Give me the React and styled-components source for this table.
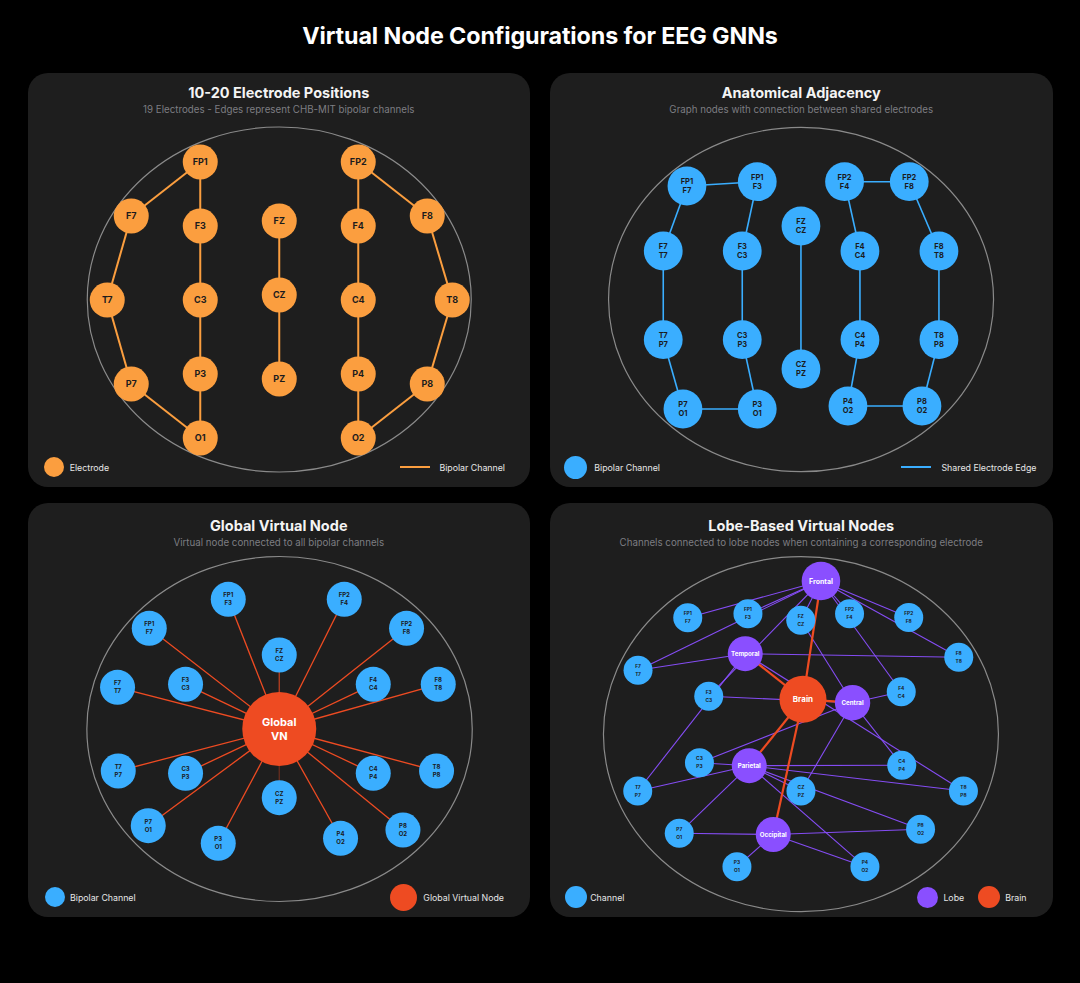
import React from 'react';
import styled, { createGlobalStyle } from 'styled-components';

const ORANGE = '#FB9E3F';
const BLUE = '#3AAEFF';
const PURPLE = '#8A4FFF';
const RED = '#EE4B22';
const DARK = '#1b1b1d';

const GlobalStyle = createGlobalStyle`
  html, body { margin: 0; padding: 0; background: #000; }
  body { font-family: Inter, "Noto Sans", "Liberation Sans", sans-serif; -webkit-font-smoothing: antialiased; }
`;

const Page = styled.div`
  width: 1080px;
  height: 983px;
  background: #000;
  display: flex;
  flex-direction: column;
  align-items: center;
`;

const MainTitle = styled.h1`
  margin: 0;
  height: 73px;
  padding-bottom: 2px;
  box-sizing: border-box;
  display: flex;
  align-items: center;
  justify-content: center;
  color: #ffffff;
  font-size: 23.3px;
  font-weight: 700;
  letter-spacing: -0.1px;
`;

const Grid = styled.div`
  width: 1025px;
  display: grid;
  grid-template-columns: 1fr 1fr;
  grid-auto-rows: 414px;
  column-gap: 20px;
  row-gap: 16px;
`;

const Panel = styled.section`
  position: relative;
  background: #1e1e1e;
  border-radius: 20px;
  overflow: hidden;
  display: flex;
  flex-direction: column;
`;

const Header = styled.header`
  height: ${(p) => p.$h}px;
  flex: none;
  box-sizing: border-box;
  padding-top: ${(p) => p.$pt}px;
  display: flex;
  flex-direction: column;
  align-items: center;
  gap: 1px;
`;

const PanelTitle = styled.h2`
  margin: 0;
  font-size: 14.5px;
  line-height: 18px;
  font-weight: 700;
  color: #f4f4f4;
`;

const Subtitle = styled.p`
  margin: 0;
  font-size: 9.75px;
  line-height: 13px;
  color: #7d7d82;
`;

const Chart = styled.svg`
  display: block;
  width: 100%;
  flex: 1;
  min-height: 0;
`;

const HeadOutline = styled.ellipse`
  fill: none;
  stroke: #8a8a8a;
  stroke-width: 1.2;
`;

const Edge = styled.line`
  stroke: ${(p) => p.$color};
  stroke-width: ${(p) => p.$w};
  stroke-opacity: ${(p) => p.$o ?? 1};
`;

const Dot = styled.circle`
  fill: ${(p) => p.$color};
`;

const Label = styled.text`
  font-family: Inter, "Noto Sans", sans-serif;
  font-weight: 700;
  font-size: ${(p) => p.$size}px;
  fill: ${(p) => p.$color};
  text-anchor: middle;
`;

const Legend = styled.div`
  position: absolute;
  left: 0;
  right: 0;
  bottom: 0;
  height: 40px;
  box-sizing: border-box;
  padding: 0 ${(p) => p.$pr}px 0 ${(p) => p.$pl}px;
  display: flex;
  align-items: center;
  justify-content: space-between;
`;

const LegendGroup = styled.div`
  display: flex;
  align-items: center;
  gap: 14px;
`;

const LegendItem = styled.div`
  display: flex;
  align-items: center;
  gap: ${(p) => p.$gap}px;
  font-size: 8.8px;
  color: #e6e6e6;
  white-space: nowrap;
`;

const Swatch = styled.span`
  flex: none;
  width: ${(p) => p.$size}px;
  height: ${(p) => p.$size}px;
  border-radius: 50%;
  background: ${(p) => p.$color};
`;

const LineSwatch = styled.span`
  flex: none;
  width: 30px;
  height: 2px;
  background: ${(p) => p.$color};
`;

/* ---------- helpers ---------- */

function NodeText({ x, y, lines, size, color, gap = 0 }) {
  const off = size * 0.36;
  if (lines.length === 1) {
    return (
      <Label x={x} y={y + off} $size={size} $color={color}>
        {lines[0]}
      </Label>
    );
  }
  return (
    <Label $size={size} $color={color}>
      <tspan x={x} y={y - gap + off}>{lines[0]}</tspan>
      <tspan x={x} y={y + gap + off}>{lines[1]}</tspan>
    </Label>
  );
}

function ChartFrame({ top, children }) {
  return (
    <Chart viewBox={`0 ${top} 502 ${414 - top}`} preserveAspectRatio="xMidYMin meet">
      {children}
    </Chart>
  );
}

/* ---------- panel 1 ---------- */

const P1 = {
  FP1: [172, 89], FP2: [330, 89],
  F7: [103, 143], F3: [172, 153], FZ: [251, 148], F4: [330, 153], F8: [399, 143],
  T7: [79, 227], C3: [172, 227], CZ: [251, 222], C4: [330, 227], T8: [424, 227],
  P7: [103, 311], P3: [172, 301], PZ: [251, 306], P4: [330, 301], P8: [399, 311],
  O1: [172, 365], O2: [330, 365],
};
const P1E = [
  ['FP1', 'F7'], ['F7', 'T7'], ['T7', 'P7'], ['P7', 'O1'],
  ['FP1', 'F3'], ['F3', 'C3'], ['C3', 'P3'], ['P3', 'O1'],
  ['FZ', 'CZ'], ['CZ', 'PZ'],
  ['FP2', 'F4'], ['F4', 'C4'], ['C4', 'P4'], ['P4', 'O2'],
  ['FP2', 'F8'], ['F8', 'T8'], ['T8', 'P8'], ['P8', 'O2'],
];

function ElectrodeChart() {
  return (
    <ChartFrame top={44}>
      <HeadOutline cx={251} cy={226.5} rx={192} ry={172.5} />
      {P1E.map(([a, b]) => (
        <Edge key={a + b} x1={P1[a][0]} y1={P1[a][1]} x2={P1[b][0]} y2={P1[b][1]} $color={ORANGE} $w={2} />
      ))}
      {Object.entries(P1).map(([k, [x, y]]) => (
        <g key={k}>
          <Dot cx={x} cy={y} r={17.5} $color={ORANGE} />
          <NodeText x={x} y={y} lines={[k]} size={9} color={DARK} />
        </g>
      ))}
    </ChartFrame>
  );
}

/* ---------- panel 2 ---------- */

const P2 = {
  'FP1-F7': [136.7, 113], 'FP1-F3': [207, 108.7], 'FP2-F4': [294.3, 108.7], 'FP2-F8': [359, 108.7],
  'F7-T7': [113, 178], 'F3-C3': [192, 178], 'FZ-CZ': [250.7, 153], 'F4-C4': [309.7, 178], 'F8-T8': [388.7, 178],
  'T7-P7': [113, 266.7], 'C3-P3': [192, 266.7], 'CZ-PZ': [250.7, 296], 'C4-P4': [309.7, 266.7], 'T8-P8': [388.7, 266.7],
  'P7-O1': [132.7, 336], 'P3-O1': [207, 336], 'P4-O2': [297.7, 333], 'P8-O2': [371.7, 333],
};
const P2E = [
  ['FP1-F7', 'FP1-F3'], ['FP1-F7', 'F7-T7'], ['F7-T7', 'T7-P7'], ['T7-P7', 'P7-O1'], ['P7-O1', 'P3-O1'],
  ['FP1-F3', 'F3-C3'], ['F3-C3', 'C3-P3'], ['C3-P3', 'P3-O1'],
  ['FZ-CZ', 'CZ-PZ'],
  ['FP2-F4', 'FP2-F8'], ['FP2-F4', 'F4-C4'], ['F4-C4', 'C4-P4'], ['C4-P4', 'P4-O2'], ['P4-O2', 'P8-O2'],
  ['FP2-F8', 'F8-T8'], ['F8-T8', 'T8-P8'], ['T8-P8', 'P8-O2'],
];

function AdjacencyChart() {
  return (
    <ChartFrame top={44}>
      <HeadOutline cx={250.8} cy={226.5} rx={192.5} ry={172.2} />
      {P2E.map(([a, b]) => (
        <Edge key={a + b} x1={P2[a][0]} y1={P2[a][1]} x2={P2[b][0]} y2={P2[b][1]} $color={BLUE} $w={1.6} />
      ))}
      {Object.entries(P2).map(([k, [x, y]]) => (
        <g key={k}>
          <Dot cx={x} cy={y} r={19.4} $color={BLUE} />
          <NodeText x={x} y={y} lines={k.split('-')} size={7.5} gap={4.4} color={DARK} />
        </g>
      ))}
    </ChartFrame>
  );
}

/* ---------- panel 3 ---------- */

const VN = [251, 226];
const P3 = {
  'FP1-F3': [200, 96.3], 'FP2-F4': [316, 96.3], 'FP1-F7': [121, 125.3], 'FP2-F8': [378.3, 125.3],
  'FZ-CZ': [251, 152],
  'F7-T7': [89.3, 184.3], 'F3-C3': [157.3, 181.3], 'F4-C4': [345, 181.3], 'F8-T8': [410, 181.3],
  'T7-P7': [90, 268], 'C3-P3': [157.3, 270.3], 'C4-P4': [345, 270.3], 'T8-P8': [408.3, 268],
  'CZ-PZ': [251, 294.7],
  'P7-O1': [120, 322.7], 'P3-O1': [190, 340.3], 'P4-O2': [312.3, 335.3], 'P8-O2': [374.7, 327],
};
const P3Fade = { 'FZ-CZ': 0.75, 'CZ-PZ': 0.35 };

function GlobalChart() {
  return (
    <ChartFrame top={48}>
      <HeadOutline cx={251.3} cy={226} rx={192.7} ry={172.5} />
      {Object.entries(P3).map(([k, [x, y]]) => (
        <Edge key={k} x1={x} y1={y} x2={VN[0]} y2={VN[1]} $color={RED} $w={1.3} $o={P3Fade[k] ?? 1} />
      ))}
      {Object.entries(P3).map(([k, [x, y]]) => (
        <g key={k}>
          <Dot cx={x} cy={y} r={17.5} $color={BLUE} />
          <NodeText x={x} y={y} lines={k.split('-')} size={6} gap={4} color={DARK} />
        </g>
      ))}
      <Dot cx={VN[0]} cy={VN[1]} r={37} $color={RED} />
      <NodeText x={VN[0]} y={VN[1]} lines={['Global', 'VN']} size={11} gap={7} color="#ffffff" />
    </ChartFrame>
  );
}

/* ---------- panel 4 ---------- */

const LOBES = {
  Frontal: { p: [270.7, 78], r: 19.3, s: 7 },
  Temporal: { p: [195, 150.7], r: 17.5, s: 6.2 },
  Central: { p: [302.3, 199.7], r: 17.7, s: 6.2 },
  Parietal: { p: [199, 262.7], r: 17.5, s: 6.2 },
  Occipital: { p: [223, 331.5], r: 17.5, s: 6.2 },
};
const BRAIN = [252.7, 196.3];
const P4 = {
  'FP1-F7': [137.5, 114.7], 'FP1-F3': [197.7, 110.7], 'FZ-CZ': [250.5, 117.3], 'FP2-F4': [299.3, 110.7],
  'FP2-F8': [358.5, 114.5], 'F8-T8': [408.5, 154.3], 'F7-T7': [87.8, 167.2], 'F3-C3': [158.5, 193.2],
  'F4-C4': [351, 188.8], 'C3-P3': [149.2, 259.7], 'C4-P4': [351.5, 262.3], 'T7-P7': [87.5, 288],
  'CZ-PZ': [250.7, 288], 'T8-P8': [413.2, 288], 'P7-O1': [129, 330.2], 'P8-O2': [370.3, 326.3],
  'P3-O1': [186.7, 363.7], 'P4-O2': [314.7, 363.7],
};
const LOBE_EDGES = {
  Frontal: ['FP1-F7', 'FP1-F3', 'FZ-CZ', 'FP2-F4', 'FP2-F8', 'F7-T7', 'F3-C3', 'F4-C4', 'F8-T8'],
  Temporal: ['F7-T7', 'T7-P7', 'F8-T8', 'T8-P8'],
  Central: ['F3-C3', 'C3-P3', 'FZ-CZ', 'CZ-PZ', 'F4-C4', 'C4-P4'],
  Parietal: ['T7-P7', 'C3-P3', 'CZ-PZ', 'C4-P4', 'T8-P8', 'P7-O1', 'P4-O2', 'P8-O2'],
  Occipital: ['P7-O1', 'P3-O1', 'P4-O2', 'P8-O2'],
};

function LobeChart() {
  return (
    <ChartFrame top={48}>
      <HeadOutline cx={250.7} cy={231.2} rx={197.5} ry={177.5} />
      {Object.entries(LOBE_EDGES).flatMap(([lobe, chans]) =>
        chans.map((c) => (
          <Edge
            key={lobe + c}
            x1={LOBES[lobe].p[0]} y1={LOBES[lobe].p[1]} x2={P4[c][0]} y2={P4[c][1]}
            $color={PURPLE} $w={1.1} $o={0.95}
          />
        ))
      )}
      {Object.entries(LOBES).map(([k, l]) => (
        <Edge key={k} x1={BRAIN[0]} y1={BRAIN[1]} x2={l.p[0]} y2={l.p[1]} $color={RED} $w={2.2} />
      ))}
      {Object.entries(P4).map(([k, [x, y]]) => (
        <g key={k}>
          <Dot cx={x} cy={y} r={14.5} $color={BLUE} />
          <NodeText x={x} y={y} lines={k.split('-')} size={4.8} gap={4} color={DARK} />
        </g>
      ))}
      <Dot cx={BRAIN[0]} cy={BRAIN[1]} r={23.5} $color={RED} />
      <NodeText x={BRAIN[0]} y={BRAIN[1]} lines={['Brain']} size={8} color="#ffffff" />
      {Object.entries(LOBES).map(([k, l]) => (
        <g key={k}>
          <Dot cx={l.p[0]} cy={l.p[1]} r={l.r} $color={PURPLE} />
          <NodeText x={l.p[0]} y={l.p[1]} lines={[k]} size={l.s} color="#ffffff" />
        </g>
      ))}
    </ChartFrame>
  );
}

/* ---------- app ---------- */

export default function App() {
  return (
    <>
      <GlobalStyle />
      <Page>
        <MainTitle>Virtual Node Configurations for EEG GNNs</MainTitle>
        <Grid>
          <Panel>
            <Header $h={44} $pt={10.5}>
              <PanelTitle>10-20 Electrode Positions</PanelTitle>
              <Subtitle>19 Electrodes - Edges represent CHB-MIT bipolar channels</Subtitle>
            </Header>
            <ElectrodeChart />
            <Legend $pl={16.7} $pr={25}>
              <LegendItem $gap={5.5}>
                <Swatch $size={20} $color={ORANGE} />
                Electrode
              </LegendItem>
              <LegendItem $gap={9}>
                <LineSwatch $color={ORANGE} />
                Bipolar Channel
              </LegendItem>
            </Legend>
          </Panel>

          <Panel>
            <Header $h={44} $pt={10.5}>
              <PanelTitle>Anatomical Adjacency</PanelTitle>
              <Subtitle>Graph nodes with connection between shared electrodes</Subtitle>
            </Header>
            <AdjacencyChart />
            <Legend $pl={14.3} $pr={16}>
              <LegendItem $gap={7}>
                <Swatch $size={23} $color={BLUE} />
                Bipolar Channel
              </LegendItem>
              <LegendItem $gap={10}>
                <LineSwatch $color={BLUE} />
                Shared Electrode Edge
              </LegendItem>
            </Legend>
          </Panel>

          <Panel>
            <Header $h={48} $pt={14}>
              <PanelTitle>Global Virtual Node</PanelTitle>
              <Subtitle>Virtual node connected to all bipolar channels</Subtitle>
            </Header>
            <GlobalChart />
            <Legend $pl={17} $pr={26}>
              <LegendItem $gap={5.5}>
                <Swatch $size={20} $color={BLUE} />
                Bipolar Channel
              </LegendItem>
              <LegendItem $gap={6.5}>
                <Swatch $size={27} $color={RED} />
                Global Virtual Node
              </LegendItem>
            </Legend>
          </Panel>

          <Panel>
            <Header $h={48} $pt={14}>
              <PanelTitle>Lobe-Based Virtual Nodes</PanelTitle>
              <Subtitle>Channels connected to lobe nodes when containing a corresponding electrode</Subtitle>
            </Header>
            <LobeChart />
            <Legend $pl={14.7} $pr={26}>
              <LegendItem $gap={3.5}>
                <Swatch $size={22} $color={BLUE} />
                Channel
              </LegendItem>
              <LegendGroup>
                <LegendItem $gap={5}>
                  <Swatch $size={21} $color={PURPLE} />
                  Lobe
                </LegendItem>
                <LegendItem $gap={5}>
                  <Swatch $size={22} $color={RED} />
                  Brain
                </LegendItem>
              </LegendGroup>
            </Legend>
          </Panel>
        </Grid>
      </Page>
    </>
  );
}
